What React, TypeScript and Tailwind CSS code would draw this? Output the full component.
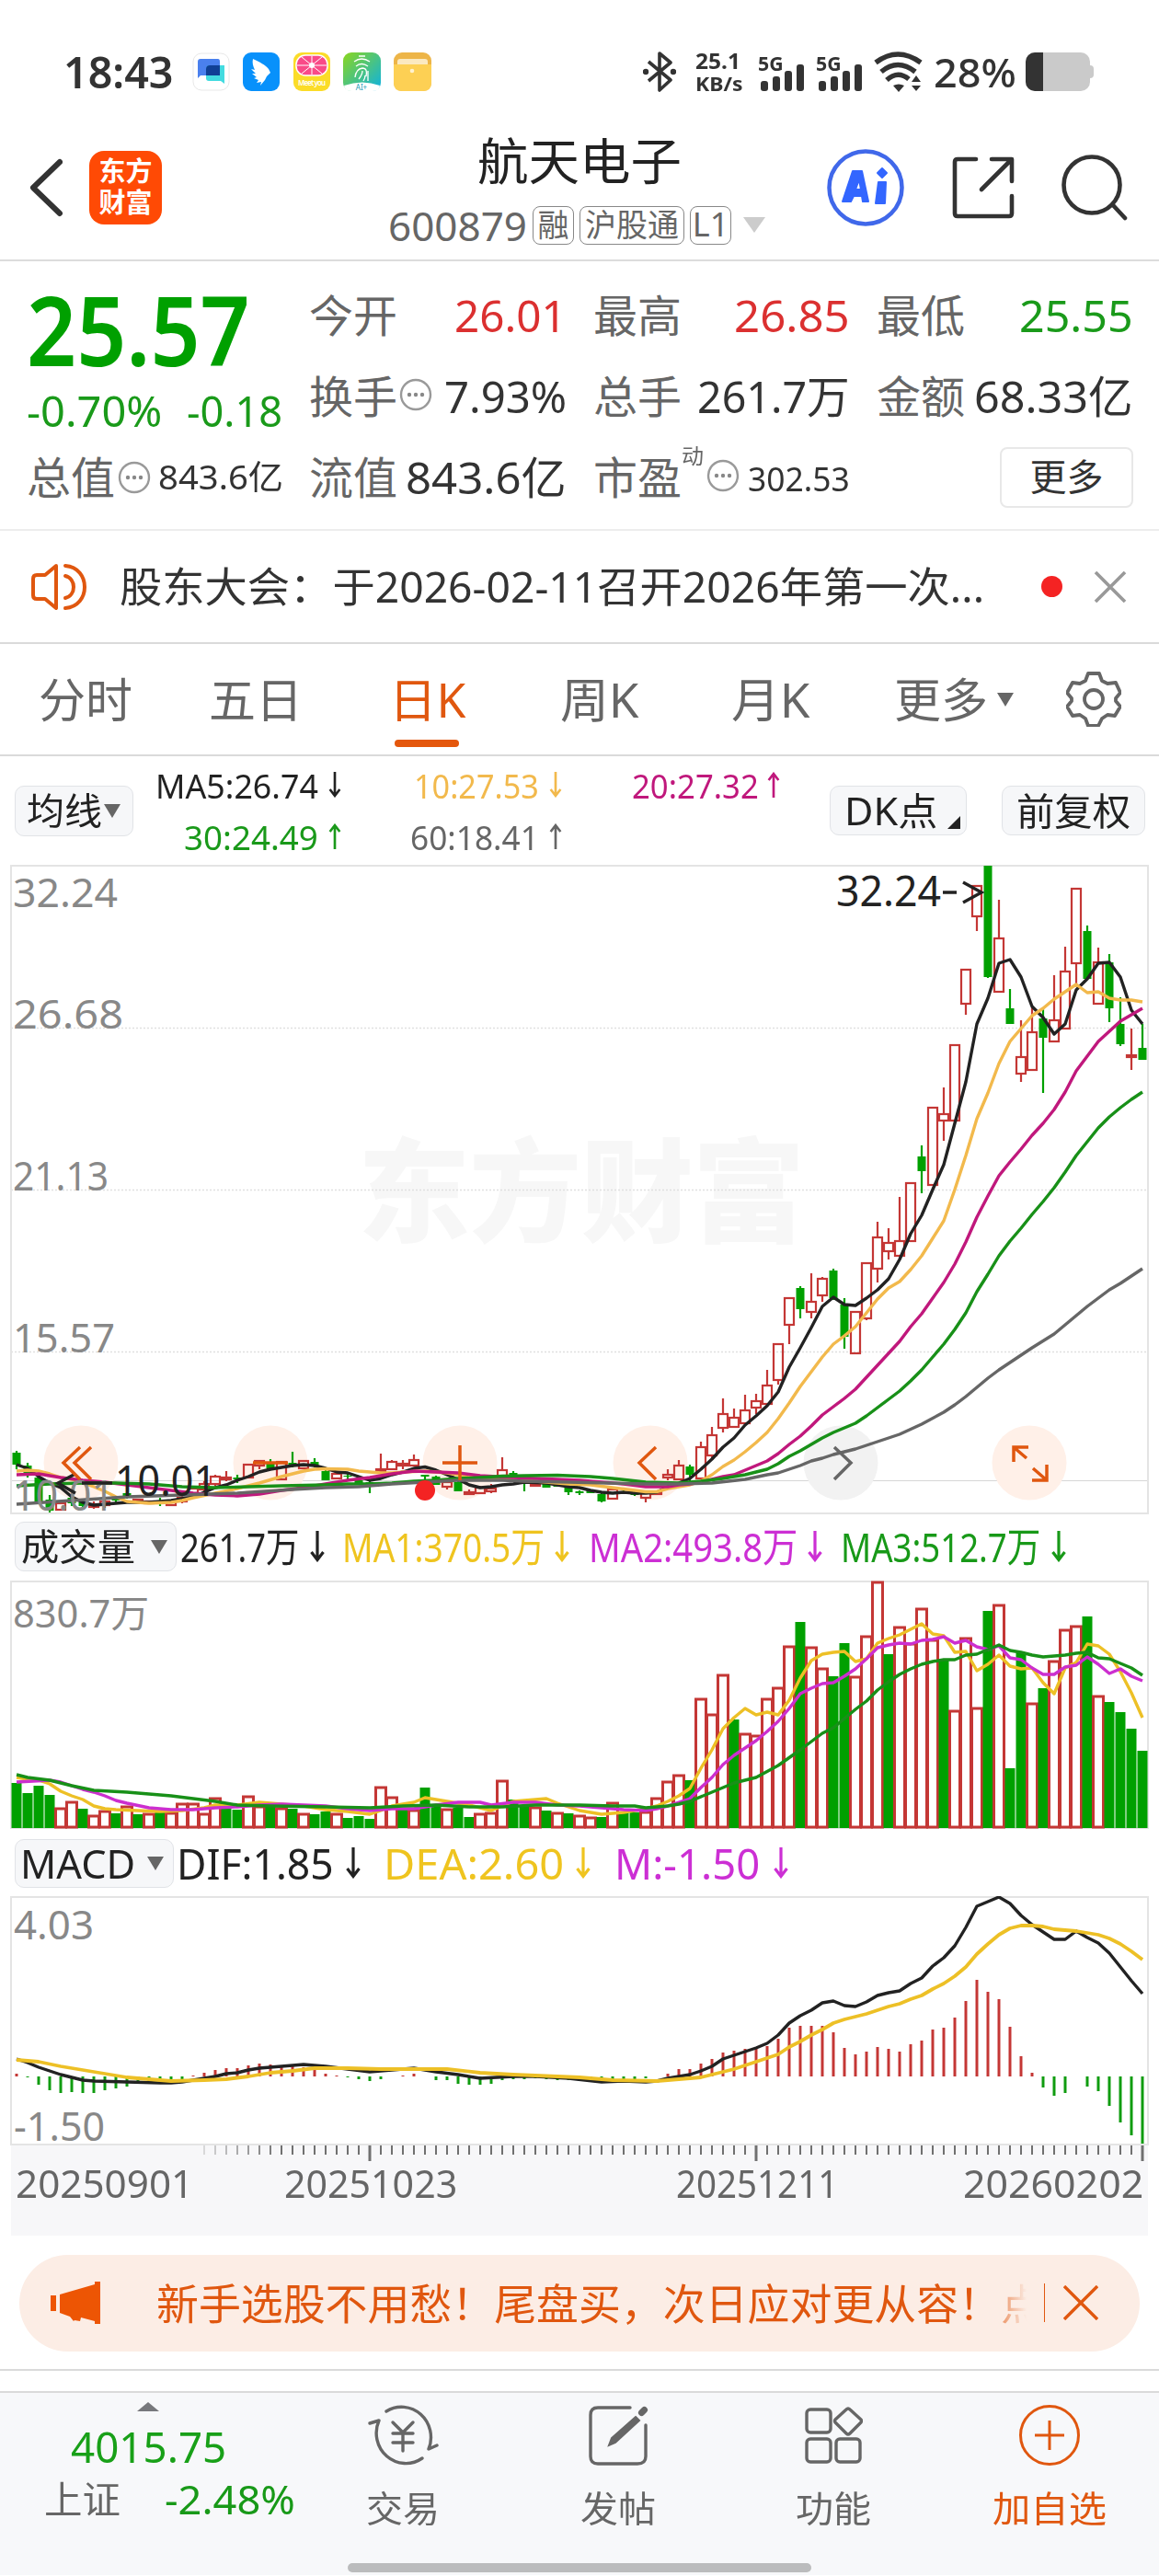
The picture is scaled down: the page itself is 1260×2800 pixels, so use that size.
import { FC, ReactNode, useLayoutEffect, useRef, useState } from 'react'

type Candle = [up: number, high: number, top: number, bottom: number, low: number]

const STEP = 12
const cx = (i: number) => 18 + i * STEP

// one entry per trading day: direction, high, body top, body bottom, low
const CANDLES: Candle[] = [
  [0, 637, 639, 652, 657], [0, 650, 653, 664, 666], [0, 665, 666, 692, 693], [0, 685, 690, 702, 704], [1, 692, 694, 701, 702],
  [0, 684, 688, 694, 697], [0, 690, 693, 697, 699], [1, 692, 695, 698, 700], [1, 688, 692, 696, 699], [0, 686, 689, 691, 693],
  [0, 682, 683, 687, 689], [1, 689, 690, 692, 694], [1, 691, 692, 694, 695], [0, 688, 692, 693, 697], [1, 691, 693, 696, 697],
  [1, 685, 688, 692, 694], [1, 675, 678, 685, 687], [1, 670, 673, 679, 681], [1, 663, 665, 673, 675], [1, 659, 666, 668, 670],
  [0, 663, 666, 668, 672], [1, 652, 652, 666, 667], [1, 647, 648, 653, 657], [0, 646, 650, 656, 657], [1, 648, 649, 668, 669],
  [0, 638, 650, 652, 655], [1, 647, 648, 656, 657], [0, 645, 649, 653, 655], [0, 658, 659, 669, 669], [1, 660, 662, 667, 667],
  [0, 662, 664, 665, 668], [0, 666, 669, 672, 674], [0, 668, 671, 673, 683], [1, 640, 657, 659, 659], [1, 647, 649, 657, 657],
  [1, 647, 651, 653, 657], [1, 641, 647, 653, 654], [0, 663, 663, 665, 668], [0, 664, 665, 674, 674], [1, 668, 671, 676, 679],
  [0, 670, 671, 681, 681], [1, 679, 682, 684, 685], [1, 675, 677, 683, 684], [1, 673, 678, 681, 683], [1, 644, 658, 664, 665],
  [0, 659, 661, 665, 667], [0, 670, 671, 672, 681], [1, 673, 673, 675, 675], [0, 672, 673, 677, 677], [0, 672, 674, 676, 676],
  [0, 674, 677, 682, 685], [0, 680, 681, 683, 685], [0, 679, 680, 683, 683], [0, 682, 684, 692, 693], [1, 678, 679, 689, 689],
  [0, 680, 681, 683, 683], [0, 681, 682, 685, 686], [1, 681, 682, 688, 693], [1, 682, 682, 684, 684], [1, 657, 663, 666, 669],
  [1, 647, 653, 668, 668], [0, 652, 654, 663, 670], [1, 627, 633, 667, 667], [1, 611, 620, 642, 645], [1, 580, 597, 612, 617],
  [1, 591, 601, 611, 611], [1, 576, 593, 607, 608], [1, 575, 583, 590, 597], [1, 549, 566, 586, 589], [1, 521, 521, 560, 565],
  [1, 471, 471, 500, 521], [0, 458, 460, 483, 493], [1, 444, 475, 486, 493], [1, 448, 450, 468, 475], [0, 439, 441, 471, 473],
  [0, 471, 478, 513, 526], [1, 486, 486, 531, 531], [1, 433, 433, 493, 495], [1, 388, 405, 439, 454], [1, 395, 411, 420, 429],
  [1, 361, 409, 425, 426], [1, 346, 346, 409, 410], [0, 305, 317, 333, 357], [1, 264, 264, 348, 349], [1, 242, 271, 278, 300],
  [1, 196, 196, 278, 280], [1, 114, 114, 151, 163], [1, 23, 23, 56, 72], [0, 1, 1, 122, 123], [1, 38, 80, 138, 138],
  [0, 135, 156, 173, 173], [1, 169, 209, 227, 236], [1, 155, 182, 223, 223], [0, 156, 167, 188, 248], [1, 120, 169, 192, 192],
  [1, 89, 116, 178, 178], [1, 26, 26, 107, 129], [0, 66, 72, 124, 125], [1, 90, 106, 151, 151], [0, 97, 106, 156, 171],
  [0, 144, 173, 195, 197], [1, 178, 207, 209, 223], [0, 173, 199, 212, 212],
]

// "index,y" pairs
const MA5 =
  '0,652 1,656 2,665 3,672 4,677 5,687 6,693 7,696 8,695 9,694 10,693 12,693 14,691 16,687 17,682 18,677 19,674 20,669 21,665 22,660 23,657 24,655 25,653 26,652 27,653 28,656 29,660 30,661 31,665 32,669 33,667 34,663 35,660 36,656 37,654.5 38,658 39,663 40,668 41,674 42,677 43,676 44,674 45,673 46,671 48,672 50,676 51,677 52,680 53,682 54,683 55,682 56,683 57,683 58,682 59,676 60,672 61,667 62,657 63,646 64,633 65,623 66,609 67,599 68,588 69,573 70,546 71,525 72,503 73,480 74,470 75,478 76,479 77,471 78,462 79,450 80,429 81,401 82,381 83,353 84,326 85,281 86,236 87,173 88,145 89,107 90,103 91,122 92,154 93,166 94,184 95,173 96,136 97,124 98,107 99,106 100,122 101,158 102,173'
const MA10 =
  '0,659 1,658 2,659 3,662 4,666 5,668 6,672 7,676 8,681 9,687 10,692 12,694 14,693 15,691 16,688 18,683 20,678 22,672 24,665 26,659 27,657 28,656.5 30,657 31,659 33,661 34,661 35,660 37,659 39,661 41,665 43,667 45,669 47,670 50,673 52,674 54,677 56,680 57,681.5 58,681.5 59,678 60,676 61,674 62,670 63,663 64,654 65,647 66,638 67,628 68,617 69,602 70,585 71,567 72,551 73,535 74,521 75,512 76,502 77,487 78,472 79,460 80,453 81,440 82,425 83,406 84,387 85,353 86,316 87,276 88,248 89,216 90,192 91,178 92,164 93,156 94,146 95,138 96,130 97,139 98,138 99,145 100,147 101,147 102,149'
const MA20 =
  '0,663 2,662 4,666 6,669 8,671 10,674 12,677 14,680 16,683 18,685 20,686 22,684 24,680 26,677 28,673 30,669 32,666 34,662 36,659 38,660 40,661 42,664 45,666 47,667 49,668 51,669 53,671 55,673 57,676 59,676 60,674 61,673 62,671 63,668 64,665 65,663 66,658 67,653 68,648 69,640 70,630 71,621 72,610 73,598 74,589 75,580 76,570 77,557 78,544 79,531 80,518 81,502 82,488 83,471 84,454 85,434 86,410 87,383 88,360 89,338 90,323 91,309 92,294 93,281 94,266 95,247 96,224 97,208 98,192 99,181 100,170 101,163 102,156'
const MA30 =
  '0,675 3,673 6,672 9,672 12,673 15,676 18,677 21,676 24,675 28,674 30,673 32,673 34,672 36,670 38,669 40,667 42,666 44,664.5 46,664 49,663.5 52,665 54,667 57,671 60,672 62,670 64,667 66,663 67,660 68,657 69,651 70,643 71,637 72,630 73,623 74,617 75,612 76,607 77,599 78,590 79,581 80,572 81,561 82,549 83,535 84,521 85,505 86,487 87,464 88,445 89,425 90,409 91,395 92,380 93,366 94,351 95,334 96,316 97,301 98,286 99,274 100,264 101,255 102,247'
const MA60 =
  '0,695 5,691 10,687 15,685 20,683 25,679 28,677 31,676 34,673 37,671 40,669 44,669 46,670 50,671 57,673 60,673 63,672 66,668 68,663 69,661 70,657 71,653 72,648 73,645 74,641 75,638 76,635 77,631 78,627 80,619 82,608 84,595 85,587 86,578 87,568 88,558 89,549 90,541 92,525 94,510 95,500 96,490 97,480 98,471 99,462 100,455 102,439'

const VOLUMES: number[] = [
  49, 38, 46, 36, 22, 29, 21, 14, 19, 16, 24, 15, 16, 17, 17, 27, 27, 16, 33, 21, 20, 35, 24, 23, 22, 21, 16, 15, 18, 16, 11, 13, 10,
  45, 34, 21, 20, 44, 23, 21, 22, 12, 16, 17, 52, 31, 24, 23, 19, 17, 16, 14, 12, 12, 28, 18, 17, 18, 33, 51, 58, 52, 141, 124, 167,
  118, 103, 101, 141, 153, 198, 224, 197, 174, 165, 201, 165, 209, 268, 189, 219, 201, 239, 205, 183, 128, 207, 131, 236, 243, 65,
  190, 136, 152, 182, 216, 220, 230, 144, 137, 126, 108, 84,
]
const VOLUME_DIR =
  'GGGGRRGRRGRGRGRRRRRGGRRGRGRGGRGGGRRGRGGRGGRRRGGRGRGRRGRGGRRRRGRRRGRRRRRGRRGGRRRGRRRRGRRRGRGGRGRRRGRGGGG'

const VMA1 =
  '0,214 1,216 2,217 3,221 4,229 5,234 6,238 7,245 8,248 9,249 11,250 13,251 15,250 17,247 18,244 20,244 22,241 24,243 26,245 28,249 30,251 32,254 33,250 34,245 35,243 36,241 37,236 39,240 41,244 43,250 44,245 45,240 46,239 48,237 49,242 51,250 53,254 55,252 57,248 58,245 59,240 60,234 61,226 62,204 63,184 64,161 65,149 66,139 67,146 68,143 69,146 70,130 71,106 72,87 73,80 74,78 75,77 76,88 77,85 78,68 79,63 80,59 81,53 82,47 83,58 84,60 85,78 86,77 87,98 88,91 89,81 90,93 91,96 92,95 93,111 94,123 95,95 96,89 97,69 98,71 99,80 100,99 101,122 102,149'
const VMA2 =
  '0,219 3,217 4,219 5,223 6,227 7,230 8,234 9,239 10,242 12,247 14,249 16,249 18,247 20,246 22,244 24,243 26,244 28,245 30,248 32,250 34,248 36,248 38,244 40,241 42,241 43,244 45,241 47,241 49,244 51,245 53,247 55,249 57,250 58,248 59,245 60,241 61,237 62,225 63,214 64,200 65,190 66,182 67,174 68,164 69,153 70,139 71,123 72,117 73,112 74,111 75,104 76,96 77,85 78,73 79,70 80,68 81,69 82,65 83,64 84,61 85,68 86,65 87,72 88,75 89,71 90,84 91,86 92,95 93,102 94,102 95,94 96,92 97,83 98,91 99,101 100,96 101,104 102,109'
const VMA3 =
  '0,211 1,214 3,217 5,223 7,228 10,230 12,232 14,234 16,237 18,240 20,244 23,245 28,246 32,247 35,245 38,244 41,246 44,246 47,244 51,244 54,245 56,245 57,247 59,245 60,243 61,240 63,230 65,220 67,214 69,201 71,184 73,166 74,160 76,140 77,131 78,119 79,110 80,102 81,96 82,91 83,88 84,86 85,86 86,81 87,80 88,75 89,70 90,76 91,78 92,81 93,83 95,81 96,79 97,78 98,84 99,85 100,90 101,95 102,103'

const HIST: number[] = [
  3, -1, -9, -15, -18, -17, -18, -18, -15, -13, -11, -8, -8, -7, -5, -3, 1, 4, 7, 9, 9, 12, 14, 13, 12, 12, 10, 8, 3, 1, -1, -3, -5,
  -3, 0, 1, 3, 0, -4, -4, -8, -9, -9, -8, -4, -3, -3, -2, -3, -4, -4, -5, -5, -7, -5, -4, -3, -2, 0, 3, 8, 8, 14, 19, 26, 28, 30, 31,
  33, 41, 53, 55, 55, 55, 48, 31, 24, 27, 32, 30, 27, 35, 39, 51, 53, 64, 82, 105, 92, 84, 54, 22, 4, -12, -21, -18, 0, -11, -16, -32,
  -50, -64, -73,
]
const DIF =
  '0,177 1,181 2,186 3,190 4,194 5,197 6,200 7,201 10,202 13,203 14,203 15,202 16,200 17,198 18,196 19,193 20,192 21,189 22,187 24,185 26,183 28,185 30,188 32,191 34,189 36,187 38,191 40,194 42,198 45,196 47,196 50,198 53,202 55,201 57,202 58,201 59,198 60,196 61,194 62,190 63,185 64,177 65,173 66,169 67,165 68,160 69,151 70,138 71,130 72,124 73,116 74,114 75,119 76,120 77,115 78,108 79,105 80,103 81,95 82,89 83,76 84,67 85,54 86,34 87,11 88,6 89,1 90,8 91,21 92,31 93,39 94,47 95,47 96,38 97,45 98,51 99,62 100,77 101,92 102,106'
const DEA =
  '0,178 2,180 4,185 6,189 8,193 10,197 12,199 14,201 17,200 19,199 21,196 23,192 25,190 27,187 30,187 33,188 36,188 39,188 42,192 45,194 49,196 51,197 54,200 58,201 60,199 62,197 63,194 64,191 65,188 66,184 67,180 68,176 69,172 70,164 71,158 72,151 73,145 74,138 75,134 76,131 77,128 78,124 79,120 80,117 81,112 82,108 83,101 84,95 85,87 86,77 87,63 88,52 89,42 90,35 91,32 92,32 93,33 94,36 95,37 96,38 97,40 98,42 99,46 100,52 101,60 102,69'

const toPoints = (s: string) =>
  s
    .split(' ')
    .map((p) => {
      const [i, y] = p.split(',')
      return `${cx(+i)},${y}`
    })
    .join(' ')

const Line: FC<{ data: string; color: string; width?: number }> = ({ data, color, width = 3.4 }) => (
  <polyline points={toPoints(data)} fill="none" stroke={color} strokeWidth={width} strokeLinejoin="round" />
)

// squeezes or stretches a single line of text to the given width
const Fit: FC<{ w: number; className?: string; children: ReactNode }> = ({ w, className = '', children }) => {
  const ref = useRef<HTMLSpanElement>(null)
  const [scale, setScale] = useState(1)
  useLayoutEffect(() => {
    if (ref.current) setScale(w / ref.current.offsetWidth)
  }, [w])
  return (
    <span className={`block shrink-0 ${className}`} style={{ width: w }}>
      <span
        ref={ref}
        className="inline-block origin-left whitespace-nowrap leading-none"
        style={{ transform: `scaleX(${scale})` }}
      >
        {children}
      </span>
    </span>
  )
}

const Dots: FC<{ className?: string }> = ({ className = '' }) => (
  <svg viewBox="0 0 36 36" className={`h-9 w-9 shrink-0 ${className}`} fill="none" stroke="#999" strokeWidth="2.4">
    <circle cx="18" cy="18" r="16" />
    <g fill="#888" stroke="none">
      <circle cx="11" cy="18" r="2.2" />
      <circle cx="18" cy="18" r="2.2" />
      <circle cx="25" cy="18" r="2.2" />
    </g>
  </svg>
)

const Arrow: FC<{ up?: boolean; className?: string }> = ({ up, className = '' }) => (
  <svg viewBox="0 0 16 34" className={`shrink-0 ${className}`} fill="none" stroke="currentColor" strokeWidth="3.2">
    {up ? <path d="M8 34V3M1.5 11 8 2.500l6.500 8.500" /> : <path d="M8 0v31M1.5 23 8 31.500l6.500-8.500" />}
  </svg>
)

const Caret: FC<{ className?: string }> = ({ className = '' }) => (
  <svg viewBox="0 0 18 15" className={`h-[15px] w-[18px] shrink-0 ${className}`} fill="currentColor">
    <path d="M0 0h18L9 15z" />
  </svg>
)

const Signal = () => (
  <div className="flex h-[42px] w-[50px] flex-col">
    <Fit w={28} className="h-[13px] text-[22px] leading-[16px] font-bold">5G</Fit>
    <div className="ml-[3px] flex items-end gap-[5px]">
      <i className="h-[11px] w-2 rounded-[3px] bg-[#333]" />
      <i className="h-[16px] w-2 rounded-[3px] bg-[#333]" />
      <i className="h-[22px] w-2 rounded-[3px] bg-[#333]" />
      <i className="h-[29px] w-2 rounded-[3px] bg-[#333]" />
    </div>
  </div>
)

const StatusBar = () => (
  <div className="flex h-[118px] items-center pt-[38px] text-[#333]">
    <Fit w={120} className="ml-[69px] text-[47px] font-semibold">18:43</Fit>
    <svg viewBox="0 0 262 42" className="ml-[20px] h-[42px] w-[262px]">
      <rect x="1" y="1" width="39" height="40" rx="9" fill="#fff" stroke="#e8e8e8" />
      <path d="M6 10q0-3 3-3h19q2 0 2 3v15H9l-3 3z" fill="#4a80ee" />
      <path d="M15 18q0-4 4-4h16v20l-4-3H18q-3 0-3-3z" fill="#43dbe0" />
      <path d="M15 18q0-4 4-4h11v11H15z" fill="#103f95" />
      <rect x="55" y="0" width="40" height="42" rx="9" fill="#0891fb" />
      <path d="M66 7c7 3 14 7 17 11l2 4-4 4-2 4-5 6 1-4-5 1 2-3-5-2 3-1-5-4 4 0-5-5 4 1c-2-4-3-8-2-12z" fill="#fff" />
      <rect x="110" y="0" width="40" height="42" rx="9" fill="#fbdc28" />
      <rect x="113" y="3" width="34" height="22" rx="10" fill="#f94b88" stroke="#fff" strokeWidth="1.5" />
      <path d="M130 4v20M114 14h32M119 5l22 18M141 5l-22 18" stroke="#fff" strokeWidth="1" />
      <circle cx="130" cy="14" r="3" fill="#fff" />
      <text x="130" y="36" textAnchor="middle" fontSize="8" fontWeight="600" fill="#fff" textLength="30">Meet you</text>
      <defs>
        <linearGradient id="finger" x1="0" y1="0" x2="1" y2="1">
          <stop offset="0" stopColor="#8bd61c" />
          <stop offset="1" stopColor="#0cb1e5" />
        </linearGradient>
      </defs>
      <rect x="164" y="0" width="41" height="42" rx="9" fill="url(#finger)" />
      <path d="M165 36q20-7 39 0-1 6-8 6h-23q-7 0-8-6z" fill="#fff" />
      <g fill="none" stroke="#fff" strokeWidth="1.3">
        <path d="M181 4h7M176 10q8-6 17 0M178 15q6-5 13 0M177 27q1-9 8-10 6 0 4 9M181 29q4-5 4-9M186 31q2-3 2-6M191 20v11" />
      </g>
      <text x="184" y="40.500" textAnchor="middle" fontSize="8" fill="#1a9bb5">AI+</text>
      <rect x="219" y="0" width="41" height="42" rx="9" fill="#edb548" />
      <rect x="223" y="7" width="33" height="9" rx="3" fill="#fbe9c0" />
      <path d="M219 13h41v20q0 9-9 9h-23q-9 0-9-9z" fill="#fdd054" />
      <circle cx="239" cy="20" r="2.3" fill="#fff2cf" />
    </svg>
    <svg viewBox="0 0 36 44" className="ml-[228px] h-[44px] w-[36px]" fill="none" stroke="#333" strokeWidth="3.6">
      <path d="M6 11l24 20-12 11V2l12 10L6 32" strokeLinejoin="round" />
      <circle cx="3" cy="22" r="1.4" fill="#333" />
      <circle cx="33" cy="22" r="1.4" fill="#333" />
    </svg>
    <div className="ml-[21px] flex w-[50px] flex-col font-bold">
      <Fit w={49} className="h-[24px] text-[23px]">25.1</Fit>
      <Fit w={51} className="h-[22px] text-[22px]">KB/s</Fit>
    </div>
    <div className="ml-[18px] flex gap-[13px]">
      <Signal />
      <Signal />
    </div>
    <svg viewBox="0 0 54 44" className="ml-[13px] h-[44px] w-[54px]" fill="none" stroke="#333" strokeWidth="5.5">
      <path d="M2 12Q26-6 51 12M8 22q18-15 37 0M14 31q12-11 24-1" />
      <path d="M21 37q6-3 12 0l-6 7z" fill="#333" stroke="none" />
      <path d="M41 33h10l-5-7zM41 37h10l-5 6z" fill="#333" stroke="none" />
    </svg>
    <Fit w={90} className="ml-[11px] text-[43px] font-medium">28%</Fit>
    <div className="ml-[10px] flex items-center">
      <div className="flex h-[42px] w-[70px] overflow-hidden rounded-[10px] bg-[#cacaca]">
        <i className="w-[19px] bg-[#333]" />
      </div>
      <i className="h-[14px] w-1 rounded-r bg-[#cacaca]" />
    </div>
  </div>
)

const Header = () => (
  <div className="flex h-[166px] items-center border-b-2 border-[#dcdcdc] pt-[8px]">
    <svg viewBox="0 0 36 64" className="ml-[32px] h-[64px] w-[36px]" fill="none" stroke="#333" strokeWidth="6" strokeLinecap="round">
      <path d="M33 4 4 32l29 28" strokeLinejoin="round" />
    </svg>
    <div className="ml-[29px] flex h-[80px] w-[79px] flex-col items-center justify-center rounded-[16px] bg-[#ff4a05] pb-[2px] text-[29px] leading-[34px] font-bold text-white">
      <span>东方</span>
      <span>财富</span>
    </div>
    <div className="ml-[244px] flex w-[420px] flex-col gap-[13px]">
      <div className="flex h-[68px] items-center justify-center pb-[4px] text-[#222]">
        <Fit w={222} className="text-[54px]">航天电子</Fit>
      </div>
      <div className="flex h-[42px] items-center text-[#666]">
        <Fit w={151} className="ml-[2px] text-[44px]">600879</Fit>
        <span className="ml-[6px] flex h-[42px] w-[45px] items-center justify-center rounded-lg border border-[#888] pb-px text-[34px] leading-none">融</span>
        <span className="ml-[6px] flex h-[42px] w-[114px] items-center justify-center rounded-lg border border-[#888] pb-px text-[34px] leading-none">沪股通</span>
        <span className="ml-[6px] flex h-[42px] w-[45px] items-center justify-center rounded-lg border border-[#888] pb-px text-[36px] leading-none">L1</span>
        <svg viewBox="0 0 24 17" className="ml-[13px] h-[17px] w-[24px]" fill="#ccc">
          <path d="M0 0h24L12 17z" />
        </svg>
      </div>
    </div>
    <svg viewBox="0 0 84 84" className="ml-[59px] h-[84px] w-[84px]">
      <circle cx="42" cy="42" r="39.5" fill="none" stroke="#4068ea" strokeWidth="4.5" />
      <g fill="#3366ff" stroke="#3366ff" strokeWidth="2" strokeLinejoin="round">
        <path fillRule="evenodd" d="M28 24h10l7 33h-6l-1-6h-9l-3 6h-9zM31 44h6l-2-11z" />
        <path d="M56 36h8l-1 23h-10zM60 21l5 5-5 5-5-5z" />
      </g>
    </svg>
    <svg viewBox="0 0 70 70" className="ml-[51px] h-[70px] w-[70px]" fill="none" stroke="#333" strokeWidth="4.6" strokeLinecap="round" strokeLinejoin="round">
      <path d="M27 4H7Q4 4 4 7v56q0 3 3 3h56q3 0 3-3V44M44 4h22v24M64 6 33 37" />
    </svg>
    <svg viewBox="0 0 72 72" className="ml-[50px] h-[72px] w-[72px]" fill="none" stroke="#333" strokeWidth="4.6" strokeLinecap="round">
      <circle cx="33" cy="33" r="30.5" />
      <path d="m56 55 13 14" />
    </svg>
  </div>
)

const Label: FC<{ children: ReactNode }> = ({ children }) => (
  <Fit w={96} className="text-[48px] text-[#666]">{children}</Fit>
)

const Quote = () => (
  <div className="flex h-[293px] gap-[29px] border-b-2 border-[#ededed] pt-[15px] pl-[29px] text-[48px] text-[#333]">
    <div className="flex w-[278px] flex-col">
      <div className="flex h-[118px] items-center text-[#00a000]">
        <Fit w={243} className="text-[104px] font-semibold">25.57</Fit>
      </div>
      <div className="flex h-[58px] items-center justify-between text-[46px] text-[#1a9a1a]">
        <Fit w={147}>-0.70%</Fit>
        <Fit w={104}>-0.18</Fit>
      </div>
      <div className="flex h-[88px] items-center">
        <Label>总值</Label>
        <Dots className="ml-[3px]" />
        <Fit w={136} className="ml-[8px] text-[36px]">843.6亿</Fit>
      </div>
    </div>
    <div className="flex w-[280px] flex-col">
      <div className="flex h-[88px] items-center justify-between">
        <Label>今开</Label>
        <Fit w={122} className="text-[#db3030]">26.01</Fit>
      </div>
      <div className="flex h-[88px] items-center justify-between">
        <div className="flex items-center"><Label>换手</Label><Dots className="mb-[4px] ml-[2px]" /></div>
        <Fit w={133}>7.93%</Fit>
      </div>
      <div className="flex h-[88px] items-center justify-between">
        <Label>流值</Label>
        <Fit w={175}>843.6亿</Fit>
      </div>
    </div>
    <div className="flex w-[279px] flex-col">
      <div className="flex h-[88px] items-center justify-between">
        <Label>最高</Label>
        <Fit w={126} className="text-[#db3030]">26.85</Fit>
      </div>
      <div className="flex h-[88px] items-center justify-between">
        <Label>总手</Label>
        <Fit w={166}>261.7万</Fit>
      </div>
      <div className="flex h-[88px] items-center">
        <Label>市盈</Label>
        <Fit w={24} className="mb-[48px] text-[23px] text-[#666]">动</Fit>
        <Dots className="mb-[4px] ml-[3px]" />
        <Fit w={111} className="ml-auto text-[37px]">302.53</Fit>
      </div>
    </div>
    <div className="flex w-[279px] flex-col">
      <div className="flex h-[88px] items-center justify-between">
        <Label>最低</Label>
        <Fit w={124} className="text-[#1a9a1a]">25.55</Fit>
      </div>
      <div className="flex h-[88px] items-center justify-between">
        <Label>金额</Label>
        <Fit w={173}>68.33亿</Fit>
      </div>
      <div className="flex h-[88px] items-center justify-end">
        <span className="flex h-[66px] w-[145px] items-center justify-center rounded-lg border-2 border-[#e8e8e8] pb-[3px] text-[40px] leading-none">更多</span>
      </div>
    </div>
  </div>
)

const Notice = () => (
  <div className="flex h-[123px] items-center border-b-2 border-[#dadada] text-[#333]">
    <svg viewBox="0 0 62 52" className="ml-[34px] h-[52px] w-[62px]" fill="none" stroke="#e0570f" strokeWidth="4" strokeLinejoin="round" strokeLinecap="round">
      <path d="M27 3 15 13H6q-4 0-4 4v18q0 4 4 4h9l12 10zM37 3c28 2 28 44 0 46M37 14c12 3 12 21 0 24" />
    </svg>
    <Fit w={940} className="ml-[34px] text-[45px]">股东大会：于2026-02-11召开2026年第一次...</Fit>
    <i className="ml-[62px] h-[23px] w-[23px] rounded-full bg-[#f42323]" />
    <svg viewBox="0 0 36 34" className="ml-[34px] h-[34px] w-[36px]" stroke="#999" strokeWidth="3.6">
      <path d="m2 1 32 32M34 1 2 33" />
    </svg>
  </div>
)

const Tabs = () => (
  <div className="flex h-[122px] items-center border-b-2 border-[#dadada] text-[51px] text-[#666]">
    <Fit w={102} className="ml-[42px]">分时</Fit>
    <Fit w={102} className="ml-[83px]">五日</Fit>
    <div className="ml-[94px] flex h-[120px] w-[84px] flex-col pt-[35px] text-[#e0570f]">
      <Fit w={84} className="h-[51px] text-[51px]">日K</Fit>
      <i className="mt-[18px] ml-[6px] h-[8px] w-[70px] rounded-full bg-[#e4570c]" />
    </div>
    <Fit w={86} className="ml-[102px]">周K</Fit>
    <Fit w={86} className="ml-[100px]">月K</Fit>
    <Fit w={102} className="ml-[91px]">更多</Fit>
    <Caret className="ml-[10px]" />
    <svg viewBox="0 0 60 60" className="ml-[57px] h-[60px] w-[60px]" fill="none" stroke="#666" strokeWidth="3.8" strokeLinejoin="round">
      <path d="M24 2h12l3 8 6 3 9-1 5 11-5 6v3l5 6-6 10-8-1-6 4-4 8H24l-3-8-6-4-8 1-6-10 5-6v-3l-5-6 6-11 8 1 6-3z" />
      <circle cx="30" cy="30" r="10" />
    </svg>
  </div>
)

const MaLegend = () => (
  <div className="flex h-[118px] items-center text-[#333]">
    <div className="ml-[16px] flex h-[55px] w-[129px] items-center rounded-[10px] border border-[#e1e3e7] bg-[#f6f7f9] text-[#222]">
      <Fit w={82} className="ml-[12px] text-[40px]">均线</Fit>
      <Caret className="ml-[2px] text-[#666]" />
    </div>
    <div className="ml-[24px] flex w-[681px] flex-col text-[37px]">
      <div className="flex h-[56px] items-center">
        <Fit w={177} className="text-[#222]">MA5:26.74</Fit>
        <Arrow className="ml-[10px] h-[28px] w-[16px] text-[#222]" />
        <Fit w={136} className="ml-[78px] text-[#f2b94c]">10:27.53</Fit>
        <Arrow className="ml-[10px] h-[28px] w-[16px] text-[#f2b94c]" />
        <Fit w={138} className="ml-[75px] text-[#c0187c]">20:27.32</Fit>
        <Arrow up className="ml-[8px] h-[28px] w-[16px] text-[#c0187c]" />
      </div>
      <div className="flex h-[56px] items-center">
        <Fit w={146} className="ml-[31px] text-[#1a991a]">30:24.49</Fit>
        <Arrow up className="ml-[10px] h-[28px] w-[16px] text-[#1a991a]" />
        <Fit w={140} className="ml-[74px] text-[#666]">60:18.41</Fit>
        <Arrow up className="ml-[10px] h-[28px] w-[16px] text-[#666]" />
      </div>
    </div>
    <div className="ml-[52px] flex h-[54px] w-[149px] items-center rounded-[10px] border border-[#e1e3e7] bg-[#f6f7f9] text-[#222]">
      <Fit w={101} className="ml-[15px] text-[41px]">DK点</Fit>
      <svg viewBox="0 0 14 14" className="mt-[26px] ml-[11px] h-[14px] w-[14px]" fill="#222">
        <path d="M14 0v14H0z" />
      </svg>
    </div>
    <div className="ml-[38px] flex h-[54px] w-[156px] items-center rounded-[10px] border border-[#e1e3e7] bg-[#f6f7f9] text-[#222]">
      <Fit w={124} className="ml-[15px] text-[41px]">前复权</Fit>
    </div>
  </div>
)

const RED = '#c43735'
const GREEN = '#00a000'

const PriceChart = () => (
  <svg viewBox="0 0 1260 706" className="block h-[706px] w-full shrink-0">
    <text x="389" y="400" fontSize="122" fontWeight="900" fill="#f7f7f7" textLength="486">东方财富</text>
    <g stroke="#e0e0e0" strokeWidth="1.5" strokeDasharray="2 2">
      <path d="M12 177.500H1248M12 353.500H1248M12 529.500H1248" />
    </g>
    <path d="M12 669.500H1248" stroke="#d6d6d6" />
    <rect x="12" y="1" width="1236" height="704" fill="none" stroke="#e4e4e4" strokeWidth="2" />
    {[88, 294, 500, 707, 1119].map((x) => (
      <circle key={x} cx={x} cy="650" r="40.500" fill="#fff0e8" />
    ))}
    <circle cx="914" cy="650" r="40.500" fill="#f2f2f2" />
    {CANDLES.map(([up, high, top, bottom, low], i) => (
      <g key={i} stroke={up ? RED : GREEN} strokeWidth="2.200">
        {top > high && <path d={`M${cx(i)} ${high}V${top}`} />}
        {low > bottom && <path d={`M${cx(i)} ${bottom}V${low}`} />}
        {up ? (
          <rect x={cx(i) - 5} y={top} width="10" height={bottom - top} fill="none" />
        ) : (
          <rect x={cx(i) - 4.5} y={top} width="9" height={bottom - top} fill={GREEN} stroke="none" />
        )}
      </g>
    ))}
    <Line data={MA5} color="#222" />
    <Line data={MA10} color="#f2b94c" />
    <Line data={MA20} color="#c0187c" />
    <Line data={MA30} color="#189018" />
    <Line data={MA60} color="#666" />
    <g fill="#888" fontSize="44">
      <text x="14" y="46" textLength="114" lengthAdjust="spacingAndGlyphs">32.24</text>
      <text x="14" y="178" textLength="120" lengthAdjust="spacingAndGlyphs">26.68</text>
      <text x="14" y="354" textLength="104" lengthAdjust="spacingAndGlyphs">21.13</text>
      <text x="14" y="530" textLength="111" lengthAdjust="spacingAndGlyphs">15.57</text>
      <text x="14" y="702" fontSize="46" textLength="110" lengthAdjust="spacingAndGlyphs">10.01</text>
    </g>
    <g fill="none" stroke="#222" strokeWidth="3.400">
      <path d="M82 662 63 672l19 11M89 672h33M1025 30h15M1047 19l20 11-20 11" />
    </g>
    <g fill="#222" fontSize="46">
      <text x="125" y="686" textLength="110" lengthAdjust="spacingAndGlyphs">10.01</text>
      <text x="909" y="45" textLength="114" lengthAdjust="spacingAndGlyphs">32.24</text>
    </g>
    <g fill="none" stroke="#e0570f" strokeWidth="3.500">
      <path d="M87 633 69 650l18 18M99 633 81 650l18 18" />
      <path d="M275 650h38M481 650h38M500 631v38" />
      <path d="m713 633-18 17 18 18" />
      <path d="M1102 649v-16h16M1102 633l14 12M1138 652v17h-16M1138 669l-15-13" />
    </g>
    <path d="m907 633 18 17-18 18" fill="none" stroke="#666" strokeWidth="3.500" />
    <circle cx="462" cy="680" r="11" fill="#f42323" />
  </svg>
)

const VolumeChart = () => (
  <svg viewBox="0 0 1260 271" className="block h-[271px] w-full shrink-0">
    <rect x="12" y="1" width="1236" height="268" fill="none" stroke="#e4e4e4" strokeWidth="2" />
    {VOLUMES.map((v, i) =>
      VOLUME_DIR[i] === 'R' ? (
        <rect key={i} x={cx(i) - 5.5} y={270 - v} width="11" height={v - 2} fill="#fff" stroke={RED} strokeWidth="3" />
      ) : (
        <rect key={i} x={cx(i) - 5.500} y={269 - v} width="11" height={v} fill={GREEN} />
      )
    )}
    <Line data={VMA1} color="#edc026" />
    <Line data={VMA2} color="#cc2fcf" />
    <Line data={VMA3} color="#189018" />
    <text x="14" y="51" fontSize="42" fill="#888" textLength="148" lengthAdjust="spacingAndGlyphs">830.7万</text>
  </svg>
)

const MacdChart = () => (
  <svg viewBox="0 0 1260 271" className="block h-[271px] w-full shrink-0">
    <rect x="12" y="1" width="1236" height="269" fill="none" stroke="#e4e4e4" strokeWidth="2" />
    {HIST.map((v, i) => (
      <path key={i} d={`M${cx(i)} 196v${-v}`} stroke={v > 0 ? RED : '#109c10'} strokeWidth="3" />
    ))}
    <Line data={DIF} color="#222" />
    <Line data={DEA} color="#edc026" width={3.8} />
    <g fill="#888" fontSize="43">
      <text x="15" y="47" textLength="87" lengthAdjust="spacingAndGlyphs">4.03</text>
      <text x="15" y="266" textLength="99" lengthAdjust="spacingAndGlyphs">-1.50</text>
    </g>
  </svg>
)

const VolumeLegend = () => (
  <div className="flex h-[72px] items-center pb-[2px] text-[44px] text-[#222]">
    <div className="ml-[16px] flex h-[54px] w-[176px] items-center rounded-[10px] border border-[#e1e3e7] bg-[#f6f7f9]">
      <Fit w={124} className="ml-[6px] text-[40px]">成交量</Fit>
      <Caret className="ml-[17px] text-[#666]" />
    </div>
    <Fit w={129} className="ml-[4px]">261.7万</Fit>
    <Arrow className="ml-[12px] h-[34px] w-[16px]" />
    <Fit w={220} className="ml-[19px] text-[#efc41f]">MA1:370.5万</Fit>
    <Arrow className="ml-[11px] h-[34px] w-[16px] text-[#efc41f]" />
    <Fit w={227} className="ml-[21px] text-[#cc2fd4]">MA2:493.8万</Fit>
    <Arrow className="ml-[11px] h-[34px] w-[16px] text-[#cc2fd4]" />
    <Fit w={217} className="ml-[20px] text-[#189918]">MA3:512.7万</Fit>
    <Arrow className="ml-[12px] h-[34px] w-[16px] text-[#189918]" />
  </div>
)

const MacdLegend = () => (
  <div className="flex h-[72px] items-center text-[46px] text-[#222]">
    <div className="ml-[16px] flex h-[53px] w-[173px] items-center rounded-[10px] border border-[#e1e3e7] bg-[#f6f7f9]">
      <Fit w={125} className="ml-[5px] text-[43px]">MACD</Fit>
      <Caret className="ml-[13px] text-[#666]" />
    </div>
    <Fit w={171} className="ml-[3px]">DIF:1.85</Fit>
    <Arrow className="ml-[12px] h-[34px] w-[18px]" />
    <Fit w={196} className="ml-[24px] text-[#efc41f]">DEA:2.60</Fit>
    <Arrow className="ml-[12px] h-[34px] w-[18px] text-[#efc41f]" />
    <Fit w={158} className="ml-[25px] text-[#cc2fd4]">M:-1.50</Fit>
    <Arrow className="ml-[14px] h-[34px] w-[18px] text-[#cc2fd4]" />
  </div>
)

const Axis = () => (
  <div className="mx-[12px] flex h-[98px] shrink-0 flex-col bg-[#f7f7f9]">
    <svg viewBox="12 0 1236 20" className="block h-[20px] w-full">
      {CANDLES.map((_, i) =>
        i < 17 ? null : (
          <path
            key={i}
            d={`M${cx(i)} 0v${i % 35 === 32 ? 17 : 10}`}
            stroke="#707070"
            strokeWidth={i % 35 === 32 ? 3 : 2}
            opacity={Math.min(1, (i - 15) / 9)}
          />
        )
      )}
    </svg>
    <div className="flex text-[42px] text-[#666]">
      <Fit w={193} className="ml-[5px]">20250901</Fit>
      <Fit w={188} className="ml-[99px]">20251023</Fit>
      <Fit w={176} className="ml-[238px]">20251211</Fit>
      <Fit w={196} className="ml-[136px]">20260202</Fit>
    </div>
  </div>
)

const Banner = () => (
  <div className="mx-[21px] mt-[21px] flex h-[105px] shrink-0 items-center rounded-full bg-[#fcede5] pb-[2px] text-[46px] text-[#e0570f]">
    <svg viewBox="0 0 56 48" className="ml-[34px] h-[48px] w-[56px]" fill="#ed5504">
      <path d="M0 16h6v17H0zM10 15 48 4V1h6v46h-6v-3l-15-4-1 4-6-1-1 1-4-5-11-4z" />
    </svg>
    <Fit w={918} className="ml-[59px]">新手选股不用愁！尾盘买，次日应对更从容！</Fit>
    <span className="h-[46px] w-[28px] overflow-hidden bg-linear-to-r from-[#e0570f]/60 to-transparent bg-clip-text leading-none text-transparent">点</span>
    <i className="ml-[19px] h-[42px] w-px bg-[#e0570f]" />
    <svg viewBox="0 0 38 38" className="ml-[20px] h-[38px] w-[38px]" stroke="#e0570f" strokeWidth="3.400">
      <path d="m1 1 36 36M37 1 1 37" />
    </svg>
  </div>
)

const Nav = () => (
  <div className="flex h-[198px] flex-col bg-[#f7f8fa] text-[39px] text-[#666]">
    <div className="flex h-[185px]">
      <div className="ml-[48px] flex w-[275px] flex-col">
        <svg viewBox="0 0 24 10" className="mt-[10px] ml-[101px] h-[10px] w-[24px]" fill="#77787c">
          <path d="M12 0 24 10H0z" />
        </svg>
        <Fit w={169} className="mt-[15px] ml-[29px] h-[46px] text-[46px] text-[#18a018]">4015.75</Fit>
        <div className="mt-[13px] flex items-center justify-between pr-[2px]">
          <Fit w={83} className="text-[41px]">上证</Fit>
          <Fit w={142} className="text-[43px] text-[#189918]">-2.48%</Fit>
        </div>
      </div>
      <div className="ml-[75px] flex w-[80px] flex-col items-center">
        <svg viewBox="0 0 78 68" className="mt-[12px] h-[68px] w-[78px]" fill="none" stroke="#666" strokeWidth="3.400" strokeLinecap="round" strokeLinejoin="round">
          <path d="M21 8A32 33 0 0 1 67 49l9-4M60 59A32 33 0 0 1 13 18L3 21" />
          <path d="m28 20 11 11 11-11M39 32v19M28 32h22M28 42h22" />
        </svg>
        <Fit w={80} className="mt-[25px]">交易</Fit>
      </div>
      <div className="ml-[153px] flex w-[82px] flex-col items-center">
        <svg viewBox="0 0 66 68" className="mt-[12px] h-[68px] w-[66px]" fill="none" stroke="#666" strokeWidth="3.400" strokeLinecap="round">
          <path d="M46 4H11q-8 0-8 8v45q0 8 8 8h43q9 0 9-8V23" />
          <path d="M58.500 9.500 61.500 6.500" strokeWidth="7" />
          <path d="m52 14 4 4-26 24-7 3 3-8z" fill="#666" strokeWidth="2" />
        </svg>
        <Fit w={82} className="mt-[25px]">发帖</Fit>
      </div>
      <div className="ml-[152px] flex w-[82px] flex-col items-center">
        <svg viewBox="0 0 64 68" className="mt-[12px] h-[68px] w-[64px]" fill="none" stroke="#666" strokeWidth="3.400" strokeLinejoin="round">
          <rect x="3" y="6" width="26" height="25" rx="4" />
          <rect x="3" y="38" width="26" height="25" rx="4" />
          <rect x="35" y="38" width="26" height="25" rx="4" />
          <path d="M46 6q2-2 4 0l12 11q1 1.500 0 3L50 32q-2 2-4 0L34 20q-1-1.500 0-3z" />
        </svg>
        <Fit w={82} className="mt-[25px]">功能</Fit>
      </div>
      <div className="ml-[132px] flex w-[124px] flex-col items-center text-[#e0570f]">
        <svg viewBox="0 0 68 68" className="mt-[12px] h-[68px] w-[68px]" fill="none" stroke="currentColor" strokeWidth="3">
          <circle cx="34" cy="34" r="31.500" />
          <path d="M18 34h32M34 18v32" />
        </svg>
        <Fit w={124} className="mt-[25px]">加自选</Fit>
      </div>
    </div>
    <i className="mx-auto h-[10px] w-[504px] rounded-full bg-[#bbbcbd]" />
  </div>
)

const App = () => (
  <div className="flex h-[2800px] w-[1260px] flex-col overflow-hidden bg-white font-['Noto_Sans','Noto_Sans_CJK_SC',sans-serif] leading-none">
    <StatusBar />
    <Header />
    <Quote />
    <Notice />
    <Tabs />
    <MaLegend />
    <PriceChart />
    <VolumeLegend />
    <VolumeChart />
    <MacdLegend />
    <MacdChart />
    <Axis />
    <Banner />
    <div className="mt-[19px] h-[26px] shrink-0 border-y-2 border-[#dadada]" />
    <Nav />
  </div>
)

export default App
